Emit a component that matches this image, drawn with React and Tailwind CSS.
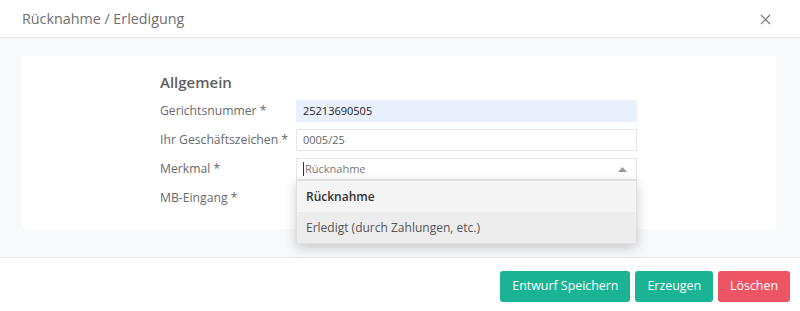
import { useState } from 'react';

const rows = [
  { label: 'Gerichtsnummer *', value: '25213690505', kind: 'filled' },
  { label: 'Ihr Geschäftszeichen *', value: '0005/25', kind: 'text' },
  { label: 'Merkmal *', value: 'Rücknahme', kind: 'select' },
  { label: 'MB-Eingang *', value: '', kind: 'text' },
];

export default function App() {
  const [open] = useState(true);

  return (
    <div className="w-[800px] h-[311px] bg-white text-[#676a6c]" style={{ fontFamily: '"Open Sans", "Liberation Sans", sans-serif' }}>
      <div className="flex h-[38px] items-center justify-between border-b border-[#e5e5e5] pl-[22px] pr-[29px]">
        <h4 className="text-[14.3px] text-[#6f6f6f]">Rücknahme / Erledigung</h4>
        <svg width="11" height="11" viewBox="0 0 11 11" className="mt-[1px]">
          <path d="M1 1L10 10M10 1L1 10" stroke="#777" strokeWidth="1.2" fill="none" />
        </svg>
      </div>

      <div className="bg-[#f8f9fb] pl-[22px] pr-[24px] pt-[18px] pb-[28px]">
        <div className="bg-white pl-[138px] pt-[16px] pb-[20px]">
          <p className="mb-[8px] h-[20px] text-[15px] font-semibold leading-[20px] text-[#5e5e5e]">Allgemein</p>
          <div className="flex flex-col gap-[7px]">
            {rows.map((row) => (
              <div key={row.label} className="flex h-[22px] items-center">
                <label className="w-[136px] whitespace-nowrap text-[12.2px] text-[#676a6c]">{row.label}</label>
                {row.kind === 'select' ? (
                  <div className="relative w-[341px]">
                    <div className="flex h-[22px] items-center justify-between border border-[#e5e6e7] bg-white pl-[6px] pr-[9px] text-[11px] text-[#777]">
                      <span className="flex items-center">
                        <span className="mr-[1px] inline-block h-[14px] w-[1px] bg-[#333]" />
                        {row.value}
                      </span>
                      <svg width="9" height="5" viewBox="0 0 9 5">
                        <path d="M0 5L4.5 0L9 5Z" fill="#999" />
                      </svg>
                    </div>
                    {open && (
                      <div className="absolute left-0 top-[22px] z-10 w-[341px] border border-[#e0e0e0] bg-[#f5f5f5] shadow-[0_4px_12px_rgba(0,0,0,0.2)]">
                        <div className="flex h-[31px] items-center px-[9px] text-[12px] font-semibold text-[#333]">Rücknahme</div>
                        <div className="flex h-[31px] items-center bg-[#ededed] px-[9px] text-[12px] text-[#555]">Erledigt (durch Zahlungen, etc.)</div>
                      </div>
                    )}
                  </div>
                ) : (
                  <div
                    className={`flex h-[22px] w-[341px] items-center border pl-[6px] text-[11px] ${
                      row.kind === 'filled' ? 'border-[#e8f0fe] bg-[#e8f0fe] text-[#222]' : 'border-[#e5e6e7] bg-white text-[#666]'
                    }`}
                  >
                    {row.value}
                  </div>
                )}
              </div>
            ))}
          </div>
        </div>
      </div>

      <div className="flex justify-end gap-[5px] border-t border-[#e5e5e5] pr-[10px] pt-[13px]">
        <button className="h-[31px] rounded-[3px] bg-[#1ab394] px-[12px] text-[12.4px] text-white">Entwurf Speichern</button>
        <button className="h-[31px] rounded-[3px] bg-[#1ab394] px-[12px] text-[12.4px] text-white">Erzeugen</button>
        <button className="h-[31px] rounded-[3px] bg-[#ed5565] px-[12px] text-[12.4px] text-white">Löschen</button>
      </div>
    </div>
  );
}
